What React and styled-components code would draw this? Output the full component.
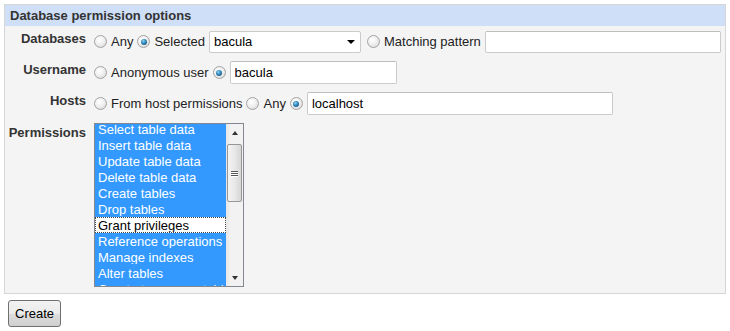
import React from 'react';
import styled, { createGlobalStyle } from 'styled-components';

const GlobalStyle = createGlobalStyle`
    body {
        margin: 0;
        background: #fff;
        font-family: "Liberation Sans", Arial, sans-serif;
        font-size: 13px;
        color: #222;
    }
`;

const Page = styled.div`
    padding: 4px;
`;

const Panel = styled.div`
    border: 1px solid #d6d6d6;
    background: #f4f4f4;
`;

const Header = styled.div`
    background: #cfdff8;
    height: 21px;
    line-height: 21px;
    padding-left: 5px;
    font-weight: bold;
    color: #333;
`;

const Body = styled.div`
    display: grid;
    grid-template-columns: 81px 1fr;
    column-gap: 8px;
    row-gap: 8px;
    padding: 4px 0 6px;
`;

const Label = styled.div`
    text-align: right;
    font-weight: bold;
    color: #333;
    line-height: 16px;
    padding-top: ${p => p.$top || 1}px;
`;

const Field = styled.div`
    display: flex;
    align-items: center;
    min-height: 23px;
    line-height: 15px;
`;

const Choice = styled.label`
    display: inline-flex;
    align-items: center;
    gap: 4px;
    margin-right: 4px;
    color: #222;
    white-space: nowrap;
    flex: none;
`;

const RadioDot = styled.span`
    width: 13px;
    height: 13px;
    flex: none;
    box-sizing: border-box;
    border-radius: 50%;
    border: 1px solid #a3a3a3;
    background: radial-gradient(circle at 40% 35%, #ffffff 0%, #f0f0f0 45%, #d2d2d2 100%);
    position: relative;

    &::after {
        content: '';
        display: ${p => (p.$checked ? 'block' : 'none')};
        position: absolute;
        left: 2.5px;
        top: 2.5px;
        width: 6px;
        height: 6px;
        border-radius: 50%;
        background: radial-gradient(circle at 40% 35%, #8fd4f4 0%, #2f84b8 45%, #0d3f66 100%);
    }
`;

const TextBox = styled.input`
    box-sizing: border-box;
    flex: none;
    width: ${p => p.$w}px;
    height: ${p => p.$h || 23}px;
    border: 1px solid #cbcbcb;
    border-top-color: #bdbdbd;
    border-radius: 2px;
    background: #fff;
    padding: 0 4px;
    font: 13px "Liberation Sans", Arial, sans-serif;
    color: #000;
    outline: none;
`;

const SelectBox = styled.div`
    box-sizing: border-box;
    flex: none;
    width: ${p => p.$w}px;
    height: 22px;
    border: 1px solid #cbcbcb;
    border-radius: 2px;
    background: #fff;
    display: flex;
    align-items: center;
    justify-content: space-between;
    padding: 0 4px;
    margin-right: 6px;
    color: #000;
`;

const Caret = styled.span`
    width: 0;
    height: 0;
    border-left: 4px solid transparent;
    border-right: 4px solid transparent;
    border-top: 4px solid #000;
    margin-right: 1px;
`;

const ListBox = styled.div`
    width: 150px;
    height: 164px;
    box-sizing: border-box;
    border: 1px solid #828790;
    background: #fff;
    display: flex;
    overflow: hidden;
`;

const Items = styled.div`
    flex: 1 1 0;
    min-width: 0;
    overflow: hidden;
    margin-top: -3px;
`;

const Item = styled.div`
    box-sizing: border-box;
    height: 16px;
    line-height: 15px;
    padding-left: 2px;
    white-space: nowrap;
    overflow: hidden;
    background: ${p => (p.$on ? '#3399ff' : '#fff')};
    color: ${p => (p.$on ? '#fff' : '#000')};
    border: ${p => (p.$focus ? '1px dotted #444' : '1px solid transparent')};
`;

const ScrollBar = styled.div`
    width: 17px;
    flex: none;
    background: linear-gradient(to right, #e6e6e6, #f2f2f2 30%, #f2f2f2);
    display: flex;
    flex-direction: column;
    align-items: center;
`;

const ArrowBtn = styled.div`
    height: 17px;
    width: 17px;
    display: flex;
    align-items: center;
    justify-content: center;

    &::before {
        content: '';
        border-left: 3.5px solid transparent;
        border-right: 3.5px solid transparent;
        ${p => (p.$down ? 'border-top: 4px solid #333;' : 'border-bottom: 4px solid #333;')}
    }
`;

const Thumb = styled.div`
    box-sizing: border-box;
    width: 15px;
    height: 58px;
    margin-top: 3px;
    border: 1px solid #979797;
    border-radius: 2px;
    background: linear-gradient(to right, #f4f4f4, #e8e8e8 50%, #d6d6d6);
    display: flex;
    flex-direction: column;
    align-items: center;
    justify-content: center;
    gap: 1px;
`;

const Grip = styled.span`
    width: 7px;
    height: 1px;
    background: #555;
    box-shadow: 0 1px 0 #fff;
`;

const Track = styled.div`
    flex: 1;
`;

const Button = styled.button`
    margin: 6px 0 0 4px;
    height: 27px;
    padding: 0 6px;
    border: 1px solid #707070;
    border-radius: 3px;
    background: linear-gradient(#f2f2f2, #ebebeb 50%, #dddddd 51%, #cfcfcf);
    font: 13px "Liberation Sans", Arial, sans-serif;
    color: #000;
`;

const permissions = [
    ['Select table data', true],
    ['Insert table data', true],
    ['Update table data', true],
    ['Delete table data', true],
    ['Create tables', true],
    ['Drop tables', true],
    ['Grant privileges', false],
    ['Reference operations', true],
    ['Manage indexes', true],
    ['Alter tables', true],
    ['Create temporary tables', true],
];

function Radio({ checked, children }) {
    return (
        <Choice>
            <RadioDot $checked={checked} />
            {children}
        </Choice>
    );
}

export default function App() {
    return (
        <Page>
            <GlobalStyle />
            <Panel>
                <Header>Database permission options</Header>
                <Body>
                    <Label>Databases</Label>
                    <Field>
                        <Radio>Any</Radio>
                        <Radio checked>Selected</Radio>
                        <SelectBox $w={152}>
                            bacula
                            <Caret />
                        </SelectBox>
                        <Radio>Matching pattern</Radio>
                        <TextBox $w={236} $h={22} defaultValue="" />
                    </Field>

                    <Label>Username</Label>
                    <Field>
                        <Radio>Anonymous user</Radio>
                        <Radio checked />
                        <TextBox $w={167} defaultValue="bacula" />
                    </Field>

                    <Label>Hosts</Label>
                    <Field>
                        <Radio>From host permissions</Radio>
                        <Radio>Any</Radio>
                        <Radio checked />
                        <TextBox $w={306} defaultValue="localhost" />
                    </Field>

                    <Label $top={2}>Permissions</Label>
                    <div>
                        <ListBox>
                            <Items>
                                {permissions.map(([name, on]) => (
                                    <Item key={name} $on={on} $focus={!on}>
                                        {name}
                                    </Item>
                                ))}
                            </Items>
                            <ScrollBar>
                                <ArrowBtn />
                                <Thumb>
                                    <Grip />
                                    <Grip />
                                    <Grip />
                                </Thumb>
                                <Track />
                                <ArrowBtn $down />
                            </ScrollBar>
                        </ListBox>
                    </div>
                </Body>
            </Panel>
            <Button>Create</Button>
        </Page>
    );
}
